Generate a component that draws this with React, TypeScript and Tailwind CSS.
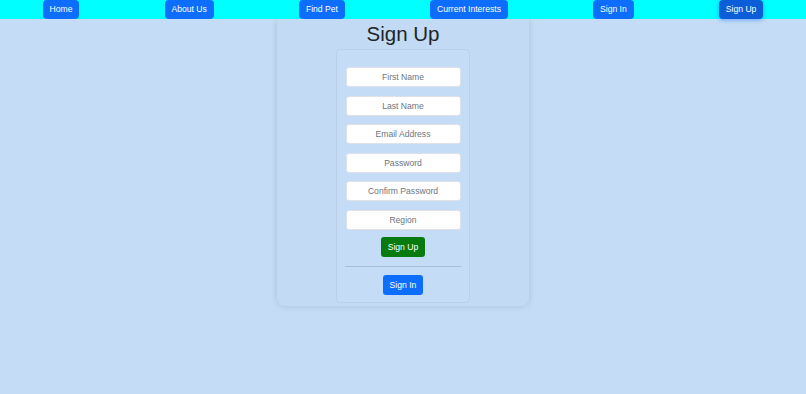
import React from "react";

const navItems = [
  { label: "Home", active: false },
  { label: "About Us", active: false },
  { label: "Find Pet", active: false },
  { label: "Current Interests", active: false },
  { label: "Sign In", active: false },
  { label: "Sign Up", active: true },
];

const fields = ["First Name", "Last Name", "Email Address", "Password", "Confirm Password", "Region"];

export default function App() {
  return (
    <div className="min-h-[394px] bg-[#c4dcf5] font-['Liberation_Sans',Arial,sans-serif]">
      <nav className="relative z-10 flex h-[19px] items-start justify-around bg-[#00ffff]">
        {navItems.map((item) => (
          <button
            key={item.label}
            type="button"
            className={`h-[19px] rounded-[4px] px-[7px] text-[8.6px] leading-[19px] text-white ${
              item.active ? "bg-[#0b5ed7] shadow-[0_1px_4px_rgba(13,110,253,0.5)]" : "bg-[#0d6efd]"
            }`}
          >
            {item.label}
          </button>
        ))}
      </nav>

      <div className="mx-auto w-[252px] rounded-b-[8px] bg-[#c2daf3] px-[59px] pb-[3px] pt-[2px] shadow-[0_0_7px_rgba(0,0,0,0.12)]">
        <h1 className="text-center text-[20.5px] leading-[25px] text-[#212529]">Sign Up</h1>
        <div className="mt-[3px] flex flex-col items-center gap-[8.5px] rounded-[4px] border border-[#b9d0e8] bg-[#c4dcf5] pb-[7px] pt-[17px]">
          {fields.map((field) => (
            <input
              key={field}
              type={field.includes("Password") ? "password" : "text"}
              placeholder={field}
              className="h-[20px] w-[115px] rounded-[3px] border border-[#dee2e6] bg-white text-center text-[8.6px] text-[#212529] outline-none placeholder:text-[#6c757d]"
            />
          ))}
          <button
            type="button"
            className="-mt-[1px] h-[20px] rounded-[3px] bg-[#077a10] px-[7px] text-[8.6px] text-white"
          >
            Sign Up
          </button>
          <div className="h-px w-[116px] bg-[#a9bfd8]" />
          <button
            type="button"
            className="h-[20px] rounded-[3px] bg-[#0d6efd] px-[7px] text-[8.6px] text-white"
          >
            Sign In
          </button>
        </div>
      </div>
    </div>
  );
}
